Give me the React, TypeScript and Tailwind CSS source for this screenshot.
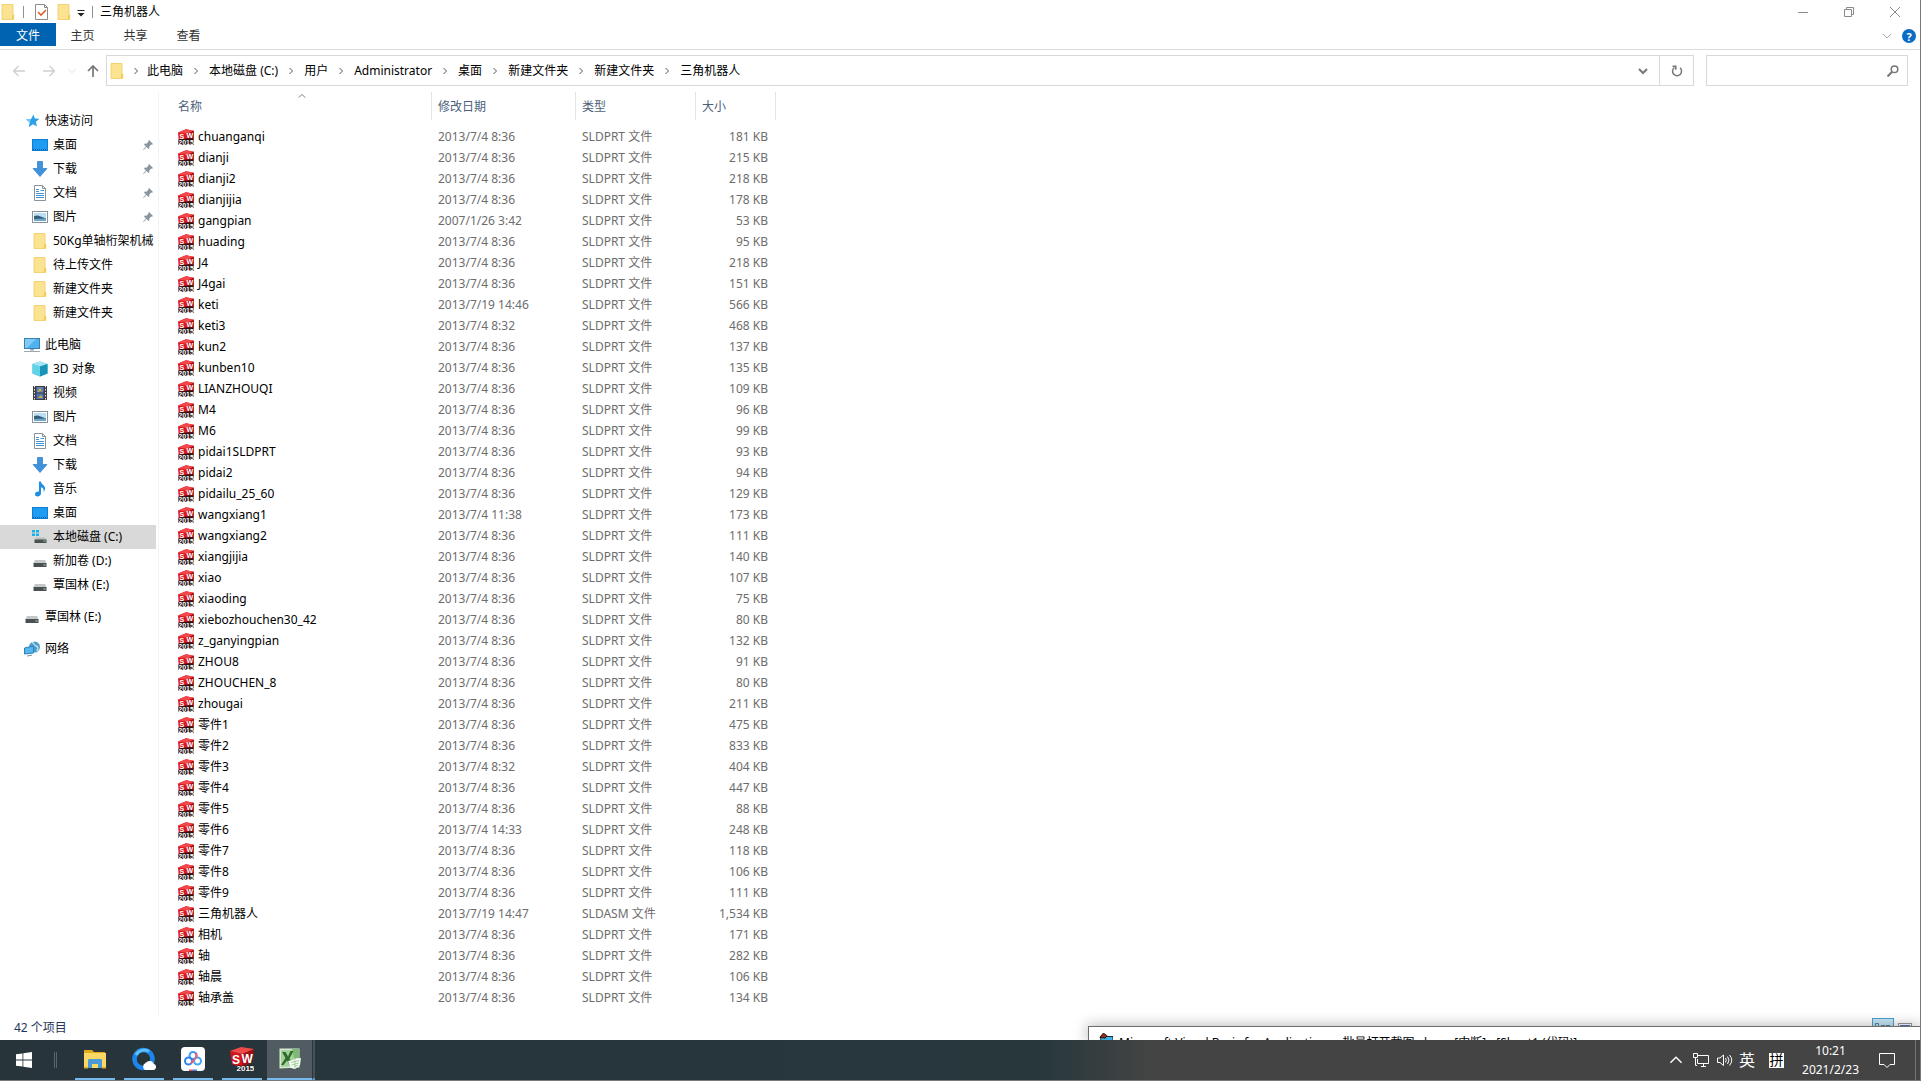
import React from "react";

type IconProps = { className?: string };

const FolderIcon = ({ className = "size-4" }: IconProps) => (
  <svg className={className} viewBox="0 0 16 16" aria-hidden="true">
    <path d="M2 .5h11v12l1 1v2H2z" fill="#fbe08a" />
    <path d="M2 .5h11v15H2z" fill="#fce391" stroke="#efcb62" strokeWidth=".8" />
    <path d="M12 11.5l2.2-1v5H12z" fill="#f3cc5c" />
  </svg>
);

const SwIcon = ({ className = "size-4" }: IconProps) => (
  <svg className={className} viewBox="0 0 16 16" aria-hidden="true">
    <path d="M0 3.500L8 .3l7.800 1.500L15 14l-6 2-8-1.500z" fill="#dc161d" />
    <path d="M0 3.500L8 .3l7.800 1.500L9.500 4.800z" fill="#f2474a" />
    <path d="M9.500 4.800l6.300-3V10H9.500z" fill="#a50d15" />
    <path d="M.5 10.500L9 9.500h6.500V16H.5z" fill="#3a1215" />
    <text x="1.500" y="9.500" fontSize="7" fontWeight="700" fontFamily="Liberation Sans" fill="#fff">S</text>
    <text x="8.500" y="8.800" fontSize="7" fontWeight="700" fontFamily="Liberation Sans" fill="#fff">W</text>
    <text x=".3" y="15.600" fontSize="7" fontWeight="700" fontFamily="Liberation Sans" fill="#fff" stroke="#1a1112" strokeWidth=".8" paintOrder="stroke">2015</text>
  </svg>
);

const SwLargeIcon = () => (
  <svg className="size-6" viewBox="0 0 24 24" aria-hidden="true">
    <path d="M0 4l12 3v14L2 17z" fill="#d3141b" />
    <path d="M12 7l12-5-2 13-10 6z" fill="#a30c13" />
    <path d="M0 4L11 0l13 2-12 5z" fill="#f04a48" />
    <text x="2" y="16.500" fontSize="12" fontWeight="700" fontFamily="Liberation Sans" fill="#fff">S</text>
    <text x="11.500" y="15.500" fontSize="12" fontWeight="700" fontFamily="Liberation Sans" fill="#fff">W</text>
    <text x="6.500" y="23.500" fontSize="8" fontWeight="700" fontFamily="Liberation Sans" fill="#fff" stroke="#222" strokeWidth="1.500" paintOrder="stroke">2015</text>
  </svg>
);

const StarIcon = () => (
  <svg className="size-4" viewBox="0 0 16 16" aria-hidden="true">
    <path d="M9.500 1.500l1.300 4 4.700.3-3.600 3 1 4.700-4-2.300-4.200 3 1-4.700L2 6.500l5-.6z" fill="#2f9fe8" />
    <path d="M2 6.500l5-.6-1.300 3.600z" fill="#7cc8f5" />
  </svg>
);
const DesktopIcon = () => (
  <svg className="size-4" viewBox="0 0 16 16" aria-hidden="true">
    <rect x=".5" y="2.500" width="15" height="11" fill="#1e9cf4" stroke="#0f7ed0" />
    <path d="M1 12.500h14" stroke="#0a5ea8" strokeDasharray="1 1" />
  </svg>
);
const DownloadIcon = () => (
  <svg className="size-4" viewBox="0 0 16 16" aria-hidden="true">
    <path d="M5.500.5h5v7h4.500L8 15.500 1 7.500h4.500z" fill="#3f93dc" stroke="#2c7cc4" strokeWidth=".7" />
  </svg>
);
const DocIcon = () => (
  <svg className="size-4" viewBox="0 0 16 16" aria-hidden="true">
    <path d="M2.500.5h8l3 3v12h-11z" fill="#fff" stroke="#8a9299" />
    <path d="M4 4.500h3M4 6.500h3M8.500 5.500h3.500M4 8.500h8M4 10.500h8M4 12.500h8" stroke="#3f92d4" />
    <path d="M10.500.5v3h3" fill="none" stroke="#8a9299" />
  </svg>
);
const PictureIcon = () => (
  <svg className="size-4" viewBox="0 0 16 16" aria-hidden="true">
    <rect x=".5" y="2.500" width="15" height="11" fill="#fff" stroke="#8a9299" />
    <rect x="2" y="4" width="12" height="8" fill="#b9def5" />
    <path d="M2 7l4-.5 8 3V11H2z" fill="#35607c" />
    <path d="M2 10l12-.5V12H2z" fill="#6fa9ca" />
  </svg>
);
const PcIcon = () => (
  <svg className="size-4" viewBox="0 0 16 16" aria-hidden="true">
    <rect x=".5" y="1.500" width="15" height="10" fill="#4db2ee" stroke="#3a80b0" />
    <path d="M1 2h11L3 11H1z" fill="#7fcbf6" />
    <path d="M6 12h4v1.500H6z" fill="#9ab" />
    <path d="M0 14.500h16" stroke="#9aa9b5" />
  </svg>
);
const CubeIcon = () => (
  <svg className="size-4" viewBox="0 0 16 16" aria-hidden="true">
    <path d="M8 .5l7.500 2.500v9.500L8 15.500.5 12.500V3z" fill="#35b9d8" />
    <path d="M8 .5L15.500 3 8 5.500.5 3z" fill="#a5e6f2" />
    <path d="M8 5.500L15.500 3v9.500L8 15.500z" fill="#1794b8" />
    <path d="M.5 3L8 5.500v10L.5 12.500z" fill="#62d2e6" />
  </svg>
);
const VideoIcon = () => (
  <svg className="size-4" viewBox="0 0 16 16" aria-hidden="true">
    <rect x="1" y="1" width="14" height="14" fill="#3c3c44" />
    <path d="M2.500 1v14M13.500 1v14" stroke="#e8e8e8" strokeDasharray="1.500 1.500" />
    <rect x="4.500" y="2" width="7" height="5.500" fill="#5a83bd" />
    <rect x="4.500" y="8.500" width="7" height="5.500" fill="#4a76b5" />
    <path d="M5 7l3-4 2 3zM6 13l3-3 2 3z" fill="#d6a740" />
  </svg>
);
const MusicIcon = () => (
  <svg className="size-4" viewBox="0 0 16 16" aria-hidden="true">
    <path d="M7 .5h1.800c.3 3 4.200 3.500 4.200 7 0 1.500-.6 2.700-1.300 3.500.3-2.800-.8-4.200-2.700-4.700v6c0 1.800-1.500 3.200-3.300 3.200S3 14.500 3 13.200C3 11.500 5 10.300 7 10.700z" fill="#1c8fe3" />
  </svg>
);
const DriveIcon = () => (
  <svg className="size-4" viewBox="0 0 16 16" aria-hidden="true">
    <path d="M3 7h10l1.500 3h-13z" fill="#c4c8ca" />
    <rect x="1.500" y="10" width="13" height="4" fill="#4b5052" />
    <rect x="11.500" y="11.500" width="2" height="1" fill="#8de08a" />
  </svg>
);
const SystemDriveIcon = () => (
  <svg className="size-4" viewBox="0 0 16 16" aria-hidden="true">
    <path d="M0 1h3v2.500H0zM4 1h3v2.500H4zM0 4.500h3V7H0zM4 4.500h3V7H4z" fill="#18b1ea" />
    <path d="M4 8.500h9l1.500 2.500H2.500z" fill="#b9bdbf" />
    <rect x="2.500" y="10.500" width="12" height="3.500" fill="#4b5052" />
    <rect x="11.500" y="11.500" width="2" height="1" fill="#8de08a" />
  </svg>
);
const NetworkPlaceIcon = () => (
  <svg className="size-4" viewBox="0 0 16 16" aria-hidden="true">
    <circle cx="10.500" cy="6" r="5.500" fill="#4f9fcb" />
    <path d="M8 1.500c3 0 1 3 4 3.500s2 3 1 5" stroke="#bfe3f5" strokeWidth="1.300" fill="none" />
    <path d="M.5 7l9-2v7l-9 1z" fill="#53b7f0" stroke="#2f7fb5" />
    <path d="M3 15l5-.8" stroke="#7b93a3" />
  </svg>
);
const PinIcon = () => (
  <svg className="mr-[3px] size-2.5 shrink-0" viewBox="0 0 10 10" aria-hidden="true">
    <path d="M6 0l4 4-1 .8-.8-.2L6.300 6.500l.1 1.700-.9.8L3.600 7 .6 9.900l-.5-.5L3 6.400 1 4.500l.8-.9 1.700.1L5.400 1.800 5.200 1z" fill="#8a949c" />
  </svg>
);

const Chevron = ({ dir, className = "" }: { dir: "right" | "down" | "up"; className?: string }) => (
  <svg className={className} viewBox="0 0 10 10" fill="none" stroke="currentColor" aria-hidden="true">
    <path d={dir === "right" ? "M3.500 2l3 3-3 3" : dir === "down" ? "M1 3l4 4 4-4" : "M1 7l4-4 4 4"} />
  </svg>
);

type Place = { label: string; icon: () => React.JSX.Element; pinned?: boolean; root?: boolean; active?: boolean };

const places: Place[][] = [
  [
    { label: "快速访问", icon: StarIcon, root: true },
    { label: "桌面", icon: DesktopIcon, pinned: true },
    { label: "下载", icon: DownloadIcon, pinned: true },
    { label: "文档", icon: DocIcon, pinned: true },
    { label: "图片", icon: PictureIcon, pinned: true },
    { label: "50Kg单轴桁架机械", icon: FolderIcon },
    { label: "待上传文件", icon: FolderIcon },
    { label: "新建文件夹", icon: FolderIcon },
    { label: "新建文件夹", icon: FolderIcon },
  ],
  [
    { label: "此电脑", icon: PcIcon, root: true },
    { label: "3D 对象", icon: CubeIcon },
    { label: "视频", icon: VideoIcon },
    { label: "图片", icon: PictureIcon },
    { label: "文档", icon: DocIcon },
    { label: "下载", icon: DownloadIcon },
    { label: "音乐", icon: MusicIcon },
    { label: "桌面", icon: DesktopIcon },
    { label: "本地磁盘 (C:)", icon: SystemDriveIcon, active: true },
    { label: "新加卷 (D:)", icon: DriveIcon },
    { label: "覃国林 (E:)", icon: DriveIcon },
  ],
  [{ label: "覃国林 (E:)", icon: DriveIcon, root: true }],
  [{ label: "网络", icon: NetworkPlaceIcon, root: true }],
];

const D = "2013/7/4 8:36";
const files: [string, string, string][] = [
  ["chuanganqi", D, "181"],
  ["dianji", D, "215"],
  ["dianji2", D, "218"],
  ["dianjijia", D, "178"],
  ["gangpian", "2007/1/26 3:42", "53"],
  ["huading", D, "95"],
  ["J4", D, "218"],
  ["J4gai", D, "151"],
  ["keti", "2013/7/19 14:46", "566"],
  ["keti3", "2013/7/4 8:32", "468"],
  ["kun2", D, "137"],
  ["kunben10", D, "135"],
  ["LIANZHOUQI", D, "109"],
  ["M4", D, "96"],
  ["M6", D, "99"],
  ["pidai1SLDPRT", D, "93"],
  ["pidai2", D, "94"],
  ["pidailu_25_60", D, "129"],
  ["wangxiang1", "2013/7/4 11:38", "173"],
  ["wangxiang2", D, "111"],
  ["xiangjijia", D, "140"],
  ["xiao", D, "107"],
  ["xiaoding", D, "75"],
  ["xiebozhouchen30_42", D, "80"],
  ["z_ganyingpian", D, "132"],
  ["ZHOU8", D, "91"],
  ["ZHOUCHEN_8", D, "80"],
  ["zhougai", D, "211"],
  ["零件1", D, "475"],
  ["零件2", D, "833"],
  ["零件3", "2013/7/4 8:32", "404"],
  ["零件4", D, "447"],
  ["零件5", D, "88"],
  ["零件6", "2013/7/4 14:33", "248"],
  ["零件7", D, "118"],
  ["零件8", D, "106"],
  ["零件9", D, "111"],
  ["三角机器人", "2013/7/19 14:47", "1,534"],
  ["相机", D, "171"],
  ["轴", D, "282"],
  ["轴晨", D, "106"],
  ["轴承盖", D, "134"],
];

const crumbs = ["此电脑", "本地磁盘 (C:)", "用户", "Administrator", "桌面", "新建文件夹", "新建文件夹", "三角机器人"];

function TitleBar() {
  return (
    <header className="flex h-[23px] shrink-0 items-center">
      <FolderIcon className="size-4" />
      <span className="ml-[7px] h-3 w-px bg-[#909090]" />
      <button aria-label="属性" className="ml-2.5">
        <svg className="size-4" viewBox="0 0 16 16" aria-hidden="true">
          <path d="M1.500 .5h9l3 3v12h-12z" fill="#fff" stroke="#8c8c8c" />
          <path d="M10.500 .5v3h3" fill="none" stroke="#8c8c8c" />
          <path d="M4 8l3 3 5-5" fill="none" stroke="#d9622f" strokeWidth="1.600" />
        </svg>
      </button>
      <button aria-label="新建文件夹" className="ml-1.5"><FolderIcon /></button>
      <button aria-label="自定义快速访问工具栏" className="ml-1 pt-1">
        <svg className="size-2.5" viewBox="0 0 10 10" aria-hidden="true">
          <path d="M1.500 1h7v1h-7zM1.500 4h7L5 7.500z" fill="#222" />
        </svg>
      </button>
      <span className="ml-1.5 h-3 w-px bg-[#909090]" />
      <h1 className="ml-[7px]">三角机器人</h1>
      <div className="mr-0.5 ml-auto flex text-[#8a8a8a]">
        <button aria-label="最小化" className="flex w-[46px] items-center justify-center">
          <svg className="size-2.5" viewBox="0 0 10 10" stroke="currentColor"><path d="M0 5.500h10" /></svg>
        </button>
        <button aria-label="还原" className="flex w-[46px] items-center justify-center">
          <svg className="size-2.5" viewBox="0 0 10 10" stroke="currentColor" fill="none"><path d="M.5 2.500h7v7h-7zM2.500 2.500v-2h7v7h-2" /></svg>
        </button>
        <button aria-label="关闭" className="flex w-[46px] items-center justify-center">
          <svg className="size-2.5" viewBox="0 0 10 10" stroke="currentColor"><path d="M0 0l10 10M10 0L0 10" /></svg>
        </button>
      </div>
    </header>
  );
}

function Ribbon() {
  return (
    <div className="flex h-[27px] shrink-0 items-start border-b border-[#dadbdc]">
      <button className="h-[23px] w-14 bg-[#0063b1] pt-0.5 text-white">文件</button>
      {["主页", "共享", "查看"].map((t) => (
        <button key={t} className="h-[23px] w-[53px] pt-0.5 text-[#333]">{t}</button>
      ))}
      <div className="mr-1 ml-auto flex h-[26px] items-center gap-2.5">
        <button aria-label="展开功能区" className="text-[#aaa]"><Chevron dir="down" className="size-2.5" /></button>
        <button aria-label="帮助" className="flex size-3.5 items-center justify-center rounded-full bg-[#0a6cc4] text-[11px] leading-none font-bold text-white">?</button>
      </div>
    </div>
  );
}

function AddressBar() {
  return (
    <div className="flex h-[42px] shrink-0 items-start pt-[5px] pr-3">
      <div className="flex h-[31px] w-[106px] shrink-0 items-center pl-3">
        <button aria-label="后退" className="text-[#cfcfcf]">
          <svg className="size-3.5" viewBox="0 0 14 14" fill="none" stroke="currentColor" strokeWidth="1.300"><path d="M13 7H1.500M6.500 2l-5 5 5 5" /></svg>
        </button>
        <button aria-label="前进" className="ml-4 text-[#cfcfcf]">
          <svg className="size-3.5" viewBox="0 0 14 14" fill="none" stroke="currentColor" strokeWidth="1.300"><path d="M1 7h11.500M7.500 2l5 5-5 5" /></svg>
        </button>
        <button aria-label="最近浏览的位置" className="ml-3 text-[#d0d0d0]"><Chevron dir="down" className="size-2" /></button>
        <button aria-label="上移" className="ml-2.5 text-[#777]">
          <svg className="size-3.5" viewBox="0 0 14 14" fill="none" stroke="currentColor" strokeWidth="1.700"><path d="M7 13V2M2 7l5-5 5 5" /></svg>
        </button>
      </div>
      <div className="flex h-[31px] flex-1 items-stretch border border-[#d9d9d9]">
        <nav aria-label="地址" className="flex flex-1 items-center pl-0.5">
          <FolderIcon />
          {crumbs.map((c, i) => (
            <React.Fragment key={i}>
              <span className={i === 0 ? "flex w-[22px] justify-center" : "flex w-[26px] justify-center"}>
                <Chevron dir="right" className="size-2.5 text-[#555]" />
              </span>
              <a href="#">{c}</a>
            </React.Fragment>
          ))}
        </nav>
        <button aria-label="历史记录" className="px-[11px] text-[#777]"><Chevron dir="down" className="size-2.5 stroke-2" /></button>
        <button aria-label="刷新" className="flex w-[34px] items-center justify-center border-l border-[#d9d9d9] text-[#777]">
          <svg className="size-3" viewBox="0 0 12 12" fill="none" stroke="currentColor" strokeWidth="1.500"><path d="M9 2.800A4.500 4.500 0 1 1 3.500 2.500M1.500 1.300h3.300v3.400" /></svg>
        </button>
      </div>
      <label className="ml-3 flex h-[31px] w-[202px] items-center border border-[#d9d9d9] pr-2">
        <input aria-label="搜索" className="min-w-0 flex-1 outline-none" />
        <svg className="size-3 text-[#777]" viewBox="0 0 12 12" fill="none" stroke="currentColor" strokeWidth="1.500"><circle cx="7.500" cy="4.300" r="3.300" /><path d="M5 7L.5 11.500" strokeWidth="2" /></svg>
      </label>
    </div>
  );
}

function Sidebar() {
  return (
    <nav aria-label="导航窗格" className="flex w-[159px] shrink-0 flex-col gap-2 border-r border-[#f3f3f3] pt-[17px] pr-0.5">
      {places.map((group, g) => (
        <ul key={g}>
          {group.map(({ label, icon: Icon, pinned, root, active }, i) => (
            <li key={i}>
              <a
                href="#"
                className={
                  "flex h-6 items-center gap-[5px] overflow-hidden whitespace-nowrap " +
                  (root ? "pl-6 " : "pl-8 ") +
                  (active ? "bg-[#d9d9d9]" : "")
                }
              >
                <span className="shrink-0"><Icon /></span>
                <span className="flex-1">{label}</span>
                {pinned && <PinIcon />}
              </a>
            </li>
          ))}
        </ul>
      ))}
    </nav>
  );
}

function FileTable() {
  const head = "mb-1.5 flex h-7 items-center border-r border-[#e3e3e3] px-1.5 pt-0.5 font-normal text-[#4c607a]";
  return (
    <main className="flex-1 pl-[13px]">
      <table className="w-[604px] table-fixed border-collapse text-left">
        <colgroup>
          <col className="w-[260px]" />
          <col className="w-36" />
          <col className="w-[120px]" />
          <col className="w-20" />
        </colgroup>
        <thead>
          <tr>
            <th className="p-0">
              <div className={head + " relative"}>
                名称
                <Chevron dir="up" className="absolute inset-x-0 top-0 mx-auto size-2 text-[#555]" />
              </div>
            </th>
            <th className="p-0"><div className={head}>修改日期</div></th>
            <th className="p-0"><div className={head}>类型</div></th>
            <th className="p-0"><div className={head}>大小</div></th>
          </tr>
        </thead>
        <tbody className="text-[#6d6d6d]">
          {files.map(([name, date, size]) => (
            <tr key={name} className="h-[21px]">
              <td className="px-1.5 py-0 text-black">
                <div className="flex items-center gap-1"><SwIcon />{name}</div>
              </td>
              <td className="px-1.5 py-0">{date}</td>
              <td className="px-1.5 py-0">{name === "三角机器人" ? "SLDASM 文件" : "SLDPRT 文件"}</td>
              <td className="py-0 pr-2 text-right">{size} KB</td>
            </tr>
          ))}
        </tbody>
      </table>
    </main>
  );
}

function StatusBar() {
  return (
    <footer className="flex h-6 shrink-0 items-center pr-2 pl-3.5 text-[#26365a]">
      42 个项目
      <div className="ml-auto flex gap-1">
        <button aria-label="详细信息" className="flex h-5 w-[22px] items-center justify-center border border-[#4a9fd0] bg-[#c4e5f6]">
          <svg className="h-2.5 w-4" viewBox="0 0 16 10" stroke="#5f7f95" fill="none"><path d="M.5 .5h3v3h-3zM6 2.500h4M11 2.500h4M.5 6.500h3v3h-3zM6 8.500h9" /></svg>
        </button>
        <button aria-label="大图标" className="mt-[5px] h-3 w-3.5 border border-[#999] bg-white p-px">
          <span className="block h-full bg-[#4c78c8]" />
        </button>
      </div>
    </footer>
  );
}

function EditorWindow() {
  return (
    <section className="absolute right-0 bottom-0 left-[1088px] h-3.5 border-t border-l border-[#6c6c6c] bg-white shadow-[0_0_14px_1px_rgba(0,0,0,0.28)]">
      <div className="flex h-[13px] items-start gap-1.5 overflow-hidden pl-2.5">
        <svg className="mt-1.5 size-3.5 shrink-0" viewBox="0 0 16 16" aria-hidden="true">
          <path d="M2 4h14v12H2z" fill="#3db5ea" stroke="#111" />
          <path d="M1 5l4-5 4 3-2 3z" fill="#9c2a1c" stroke="#111" />
        </svg>
        <p className="mt-1.5 leading-5 whitespace-nowrap text-black">
          Microsoft Visual Basic for Applications - 批量打开截图.xlsm - [中断] - [Sheet1 (代码)]
        </p>
      </div>
    </section>
  );
}

const ExplorerTask = () => (
  <svg className="size-6" viewBox="0 0 24 24" aria-hidden="true">
    <path d="M1 3h8l2 2h11v4H1z" fill="#e5a91f" />
    <path d="M1 6h22v15H1z" fill="#fbd766" />
    <path d="M5 21v-7.500c0-1 .6-1.500 1.500-1.500h11c1 0 1.500.5 1.500 1.500V21h-4v-4H9v4z" fill="#4a9ad6" />
    <path d="M1 20h4v1.500H1zM19 20h4v1.500h-4z" fill="#e5a91f" />
  </svg>
);
const BrowserTask = () => (
  <svg className="size-6" viewBox="0 0 24 24" aria-hidden="true">
    <circle cx="11.500" cy="12" r="9" fill="none" stroke="#1d86ee" strokeWidth="4.500" />
    <path d="M4 8a9 9 0 0 1 13-3.500" fill="none" stroke="#5fc0fb" strokeWidth="3" />
    <path d="M13 23a4 4 0 0 1 .5-7 5 5 0 0 1 8.500 1 3.200 3.200 0 0 1 0 6z" fill="#fff" />
  </svg>
);
const CloudTask = () => (
  <svg className="size-6" viewBox="0 0 24 24" aria-hidden="true">
    <rect width="24" height="24" rx="4" fill="#fff" />
    <g fill="none" strokeWidth="2">
      <circle cx="12" cy="8.500" r="3.500" stroke="#3a9cf5" />
      <circle cx="7.500" cy="14" r="3.500" stroke="#2f86ee" />
      <circle cx="16.500" cy="14" r="3.500" stroke="#40a8f6" />
      <path d="M14.500 6a3.500 3.500 0 0 1 0 5M10 16.500L14 11.500" stroke="#ef5a6a" />
    </g>
    <path d="M8 22.500h4V24H8z" fill="#e8505c" /><path d="M12 22.500h4V24h-4z" fill="#2f86ee" />
  </svg>
);
const ExcelTask = () => (
  <svg className="size-6" viewBox="0 0 24 24" aria-hidden="true">
    <path d="M1.500 1.500h20v19l-20 1z" fill="#d6ead0" />
    <path d="M3 3h11l4 4v12L3 20z" fill="#a5cf9b" />
    <path d="M14 2h7v9h-5z" fill="#7dbb74" />
    <path d="M4 5h3.500l2.500 4.500L12.500 4h3l-4 7.500 3.500 6h-3.500l-2.500-4-3.500 4.500H3l4.500-7z" fill="#2f6b2b" />
    <path d="M10 14l13-3-1 7-5 4-4-1z" fill="#f6fbf3" />
    <path d="M13 15.500l8-2M13.500 18l7.500-2M16 20l4-2M17 13.500v7" stroke="#8fc184" strokeWidth=".8" />
  </svg>
);

const tasks = [
  { label: "文件资源管理器", icon: ExplorerTask },
  { label: "浏览器", icon: BrowserTask },
  { label: "网盘", icon: CloudTask },
  { label: "SolidWorks 2015", icon: SwLargeIcon },
  { label: "Excel", icon: ExcelTask, active: true },
];

function Taskbar() {
  return (
    <footer className="flex h-10 shrink-0 bg-[linear-gradient(90deg,#27353b_0%,#27373c_54%,#444_60%,#444_100%)] text-white">
      <button aria-label="开始" className="flex w-12 items-center justify-center">
        <svg className="size-4" viewBox="0 0 16 16" fill="#fff"><path d="M0 2.300l6.500-.9v6.200H0zM7.300 1.300L16 0v7.600H7.300zM0 8.400h6.500v6.200L0 13.700zM7.300 8.400H16V16l-8.700-1.200z" /></svg>
      </button>
      <span className="mt-3 mr-3.5 ml-1.5 h-4 w-[3px] border-x border-[#59656a]" />
      {tasks.map(({ label, icon: Icon, active }) => (
        <button
          key={label}
          aria-label={label}
          className={
            active
              ? "flex w-[45px] items-center justify-center border-b-2 border-[#76b9ed] bg-[#515c62]"
              : "mr-[5px] ml-1 flex w-10 items-center justify-center border-b-2 border-[#76b9ed]"
          }
        >
          <Icon />
        </button>
      ))}
      <span className="w-[3px] border-b-2 border-l border-b-[#5f95bf] border-l-[#2b373c] bg-[#465157]" />
      <div className="ml-auto flex items-center">
        <button aria-label="显示隐藏的图标" className="mr-2.5"><Chevron dir="up" className="size-3.5" /></button>
        <button aria-label="网络" className="mr-2">
          <svg className="size-4" viewBox="0 0 16 16" fill="none" stroke="#fff"><path d="M5 3.500h10.500v8H4.500V7M8 14.500h5M10.500 11.500v3M.5 1.500h4v4h-4zM2.500 5.500v8H4" /></svg>
        </button>
        <button aria-label="音量" className="mr-1.5">
          <svg className="size-4" viewBox="0 0 16 16" fill="none" stroke="#fff"><path d="M.5 6h2.500l3.500-3v10.500L3 10.500H.5zM8.500 6q1.500 2 0 4.500M10.500 4.500q3 3.500 0 7.500M12.500 3q4.500 5 0 10.500" /></svg>
        </button>
        <button className="mr-3.5 text-base leading-none">英</button>
        <button className="mr-[18px] flex size-[15px] items-center justify-center bg-white text-sm leading-none text-black">拼</button>
        <time className="mr-5 text-center leading-[19px]">
          10:21
          <br />
          2021/2/23
        </time>
        <button aria-label="通知" className="mr-5">
          <svg className="size-4" viewBox="0 0 16 16" fill="none" stroke="#fff"><path d="M.5 1.500h15v11h-4.500l-3 3-3-3H.5z" /></svg>
        </button>
        <span className="mr-1 h-10 w-px bg-[#777]" />
      </div>
    </footer>
  );
}

export default function App() {
  return (
    <div className="flex h-screen flex-col overflow-hidden border-r border-b border-[#7a7a7a] bg-white font-['Noto_Sans','Noto_Sans_CJK_SC',sans-serif] text-xs text-black">
      <div className="relative flex flex-1 flex-col overflow-hidden">
        <TitleBar />
        <Ribbon />
        <AddressBar />
        <div className="flex flex-1">
          <Sidebar />
          <FileTable />
        </div>
        <StatusBar />
        <EditorWindow />
      </div>
      <Taskbar />
    </div>
  );
}
